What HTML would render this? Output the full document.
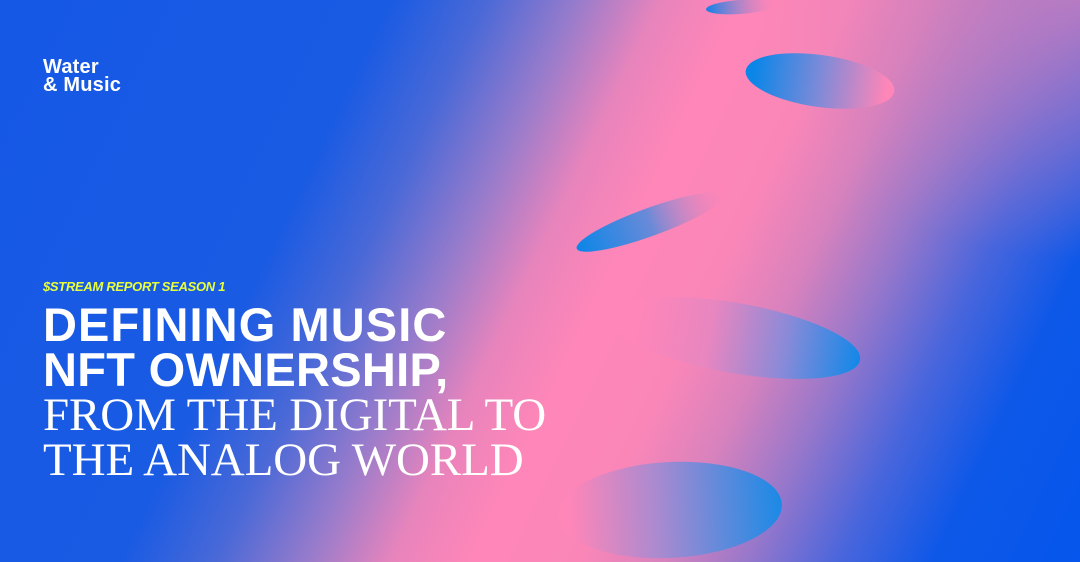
<!DOCTYPE html>
<html><head><meta charset="utf-8"><style>
html,body{margin:0;padding:0}
body{width:1080px;height:562px;overflow:hidden;position:relative;
background:
radial-gradient(ellipse 320px 260px at 1080px 0px, rgba(210,128,188,0.75), rgba(210,128,188,0) 100%),
linear-gradient(115.7deg,#1558e6 0%,#1a5be3 29%,#4a69d7 36%,#9a7ccb 43%,#e884bc 49%,#ff86b8 55%,#fa86b8 63%,#d882bd 69%,#9a78ca 75%,#4a66dc 82%,#0e58e8 89%,#0556ec 100%);}
.t{position:absolute;left:43px;color:#fff;white-space:nowrap}
</style></head><body>
<svg width="1080" height="562" style="position:absolute;left:0;top:0">
<defs>
<linearGradient id="g1" x1="0" x2="1" y1="0" y2="0"><stop offset="0" stop-color="#1080e8"/><stop offset="1" stop-color="#ff86b8" stop-opacity="0.3"/></linearGradient>
<linearGradient id="g2" x1="0" x2="1" y1="0" y2="0"><stop offset="0.05" stop-color="#0a86e8"/><stop offset="0.5" stop-color="#7e8ad8"/><stop offset="0.95" stop-color="#ff86b8"/></linearGradient>
<linearGradient id="g3" x1="0" x2="1" y1="0" y2="0"><stop offset="0" stop-color="#0a86e8"/><stop offset="0.5" stop-color="#6a8ad8"/><stop offset="1" stop-color="#ff86b8" stop-opacity="0.2"/></linearGradient>
<linearGradient id="g4" x1="0" x2="1" y1="0" y2="0"><stop offset="0.1" stop-color="#ff86b8"/><stop offset="0.4" stop-color="#e886c0"/><stop offset="0.7" stop-color="#8a8ad8"/><stop offset="1" stop-color="#1288e8"/></linearGradient>
<linearGradient id="g5" x1="0" x2="1" y1="0" y2="0"><stop offset="0.05" stop-color="#ff86b8"/><stop offset="0.45" stop-color="#a88ad0"/><stop offset="1" stop-color="#1a8ae6"/></linearGradient>
</defs>
<ellipse cx="740" cy="7" rx="34" ry="7" fill="url(#g1)" transform="rotate(-4 740 7)"/>
<ellipse cx="820" cy="81" rx="75" ry="26" fill="url(#g2)" transform="rotate(8 820 81)"/>
<ellipse cx="650" cy="222" rx="78" ry="14" fill="url(#g3)" transform="rotate(-20 650 222)"/>
<ellipse cx="735" cy="338" rx="127" ry="35" fill="url(#g4)" transform="rotate(10 735 338)"/>
<ellipse cx="670" cy="510" rx="112" ry="48" fill="url(#g5)" transform="rotate(-3 670 510)"/>
</svg>
<div class="t" style="top:58px;font:bold 20px/18px 'Liberation Sans',sans-serif;letter-spacing:0.2px">Water<br>&amp; Music</div>
<div class="t" style="top:279px;font:italic bold 13px 'Liberation Sans',sans-serif;color:#e8ff3c;letter-spacing:-0.3px">$STREAM REPORT SEASON 1</div>
<div class="t" style="top:302px;font:bold 47px/45px 'Liberation Sans',sans-serif;letter-spacing:0.3px"><span style="letter-spacing:1.1px">DEFINING MUSIC</span><br>NFT OWNERSHIP,</div>
<div class="t" style="top:393px;font:47px/45px 'Liberation Serif',serif;letter-spacing:-0.1px">FROM THE DIGITAL TO<br>THE ANALOG WORLD</div>
</body></html>
